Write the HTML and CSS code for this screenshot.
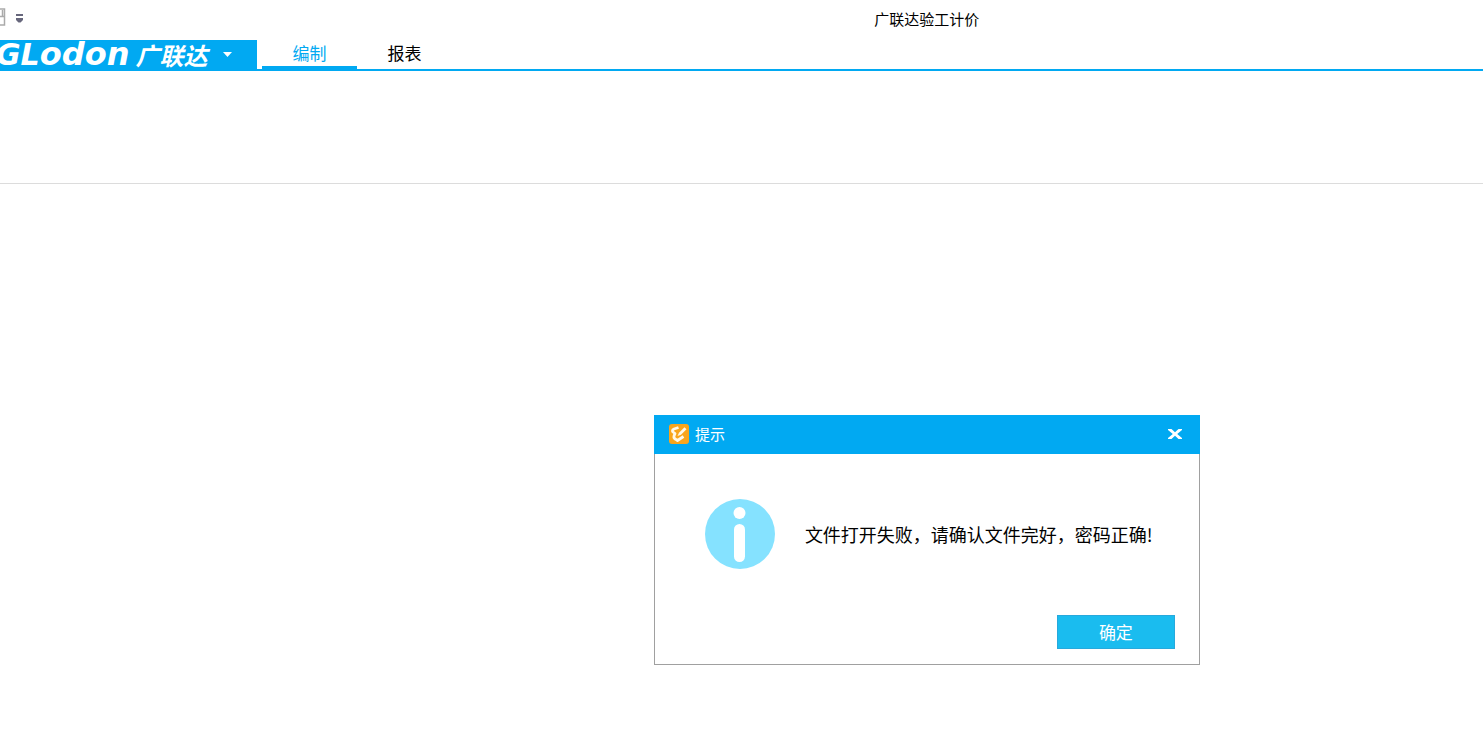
FILE: index.html
```html
<!DOCTYPE html>
<html lang="zh-CN">
<head>
<meta charset="utf-8">
<title>广联达验工计价</title>
<link rel="stylesheet" href="styles.css">
</head>
<body>
<header class="titlebar">
  <div class="quick-access">
    <svg class="save-icon" width="6" height="18" viewBox="0 0 6 18" aria-hidden="true"><path d="M0 1h4.500v16H0M0 8.500h4M2.500 2v6" fill="none" stroke="#aaaaaa" stroke-width="1.500"/></svg>
    <button class="quick-menu" type="button" aria-label="自定义快速访问工具栏"><svg width="7" height="10" viewBox="0 0 7 10"><path d="M0 0h7v2H0zM0 4h7v2L4.500 8.500h-2L0 6z" fill="#67677c"/></svg></button>
  </div>
  <h1 class="app-title">广联达验工计价</h1>
</header>
<nav class="ribbon-tabs">
  <button class="brand" type="button">
    <span class="brand-latin"><span class="brand-caps">GL</span>odon</span>
    <span class="brand-han">广联达</span>
    <svg class="brand-arrow" width="9" height="5" viewBox="0 0 9 5" aria-hidden="true"><path d="M0 0h9L4.500 5z" fill="#ffffff"/></svg>
  </button>
  <button class="tab tab-active" type="button">编制</button>
  <button class="tab" type="button">报表</button>
</nav>
<section class="ribbon"></section>
<main class="workspace">
  <div class="dialog" role="alertdialog" aria-labelledby="dialog-title" aria-describedby="dialog-message">
    <div class="dialog-head">
      <svg width="20" height="20" viewBox="0 0 20 20" aria-hidden="true">
        <rect width="20" height="20" rx="3" fill="#f9a51b"/>
        <path d="M9.500 3.500L5 5Q2.500 6.200 4 8L6 9.500L5 12Q4.500 14 6.500 15.200L8.500 16.500L14.500 12.500" fill="none" stroke="#fff8e8" stroke-width="2.800" stroke-linejoin="round"/>
        <path d="M8.500 12L10 8.800L15.500 3.300L17.500 5.300L12 10.800Z" fill="#fff8e8"/>
      </svg>
      <h2 class="dialog-title" id="dialog-title">提示</h2>
      <button class="close" type="button" aria-label="关闭"><svg width="14" height="12" viewBox="0 0 14 12"><path d="M0 1h3.500L7 4.300 10.500 1H14v1L9.200 6 14 10v1h-3.500L7 7.700 3.500 11H0v-1L4.800 6 0 2z" fill="#ffffff"/></svg></button>
    </div>
    <div class="dialog-body">
      <svg width="70" height="70" viewBox="0 0 70 70" aria-hidden="true"><circle cx="35" cy="35" r="35" fill="#85e2ff"/><circle cx="34.500" cy="14" r="6" fill="#ffffff"/><rect x="29" y="25" width="11" height="38" rx="5.500" fill="#ffffff"/></svg>
      <p class="message" id="dialog-message">文件打开失败，请确认文件完好，密码正确!</p>
    </div>
    <div class="dialog-foot"><button class="confirm" type="button">确定</button></div>
  </div>
</main>
</body>
</html>
```
FILE: styles.css
```css
* { box-sizing: border-box; }
body {
  margin: 0;
  background: #ffffff;
  color: #000000;
  font-family: "Noto Sans CJK SC", sans-serif;
  overflow-x: hidden;
}
h1, h2, p { margin: 0; font-weight: 400; }
button {
  margin: 0;
  padding: 0;
  border: 0;
  background: none;
  color: inherit;
  font-family: inherit;
}
svg { display: block; flex: none; }

.titlebar { display: flex; height: 40px; }
.quick-access {
  display: flex;
  width: 25%;
  gap: 10px;
  padding-top: 8px;
}
.quick-menu { display: flex; padding-top: 6px; }
.app-title {
  flex: 1;
  text-align: center;
  font-size: 15px;
  line-height: 38px;
}

.ribbon-tabs {
  display: flex;
  height: 31px;
  border-bottom: 2px solid #01a9f2;
}
.brand {
  display: flex;
  align-items: center;
  width: 257px;
  height: 29px;
  margin-right: 5px;
  background: #01a9f2;
  color: #ffffff;
  white-space: nowrap;
}
.brand-latin {
  margin-left: -4px;
  font: italic 700 32px/29px "DejaVu Sans", sans-serif;
}
.brand-caps { font-size: 30px; }
.brand-han {
  margin-left: 6px;
  font-size: 24px;
  font-style: italic;
  font-weight: 700;
  line-height: 29px;
}
.brand-arrow { margin-left: 16px; }
.tab {
  width: 95px;
  border-bottom: 3px solid transparent;
  font-size: 17px;
  line-height: 26px;
}
.tab-active { border-bottom-color: #01a9f2; color: #01a9f2; }

.ribbon { height: 113px; border-bottom: 1px solid #dcdcdc; }

.workspace {
  display: flex;
  justify-content: center;
  padding: 231px 0 0 25%;
}
.dialog {
  width: 546px;
  border: 1px solid #a0a0a0;
  border-top: 0;
  background: #ffffff;
}
.dialog-head {
  display: flex;
  align-items: center;
  height: 39px;
  margin: 0 -1px;
  padding: 0 18px 2px 15px;
  background: #01a9f2;
  color: #ffffff;
}
.dialog-title { margin-left: 6px; font-size: 15px; line-height: 36px; }
.close { margin-left: auto; }
.dialog-body {
  display: flex;
  align-items: center;
  gap: 30px;
  padding: 45px 24px 46px 50px;
}
.message { font-size: 18px; line-height: 26px; white-space: nowrap; }
.dialog-foot { display: flex; justify-content: flex-end; padding: 0 24px 15px; }
.confirm {
  width: 118px;
  height: 34px;
  border: 1px solid #27a9dc;
  background: #1abcef;
  color: #ffffff;
  font-size: 17px;
  line-height: 32px;
}
```
